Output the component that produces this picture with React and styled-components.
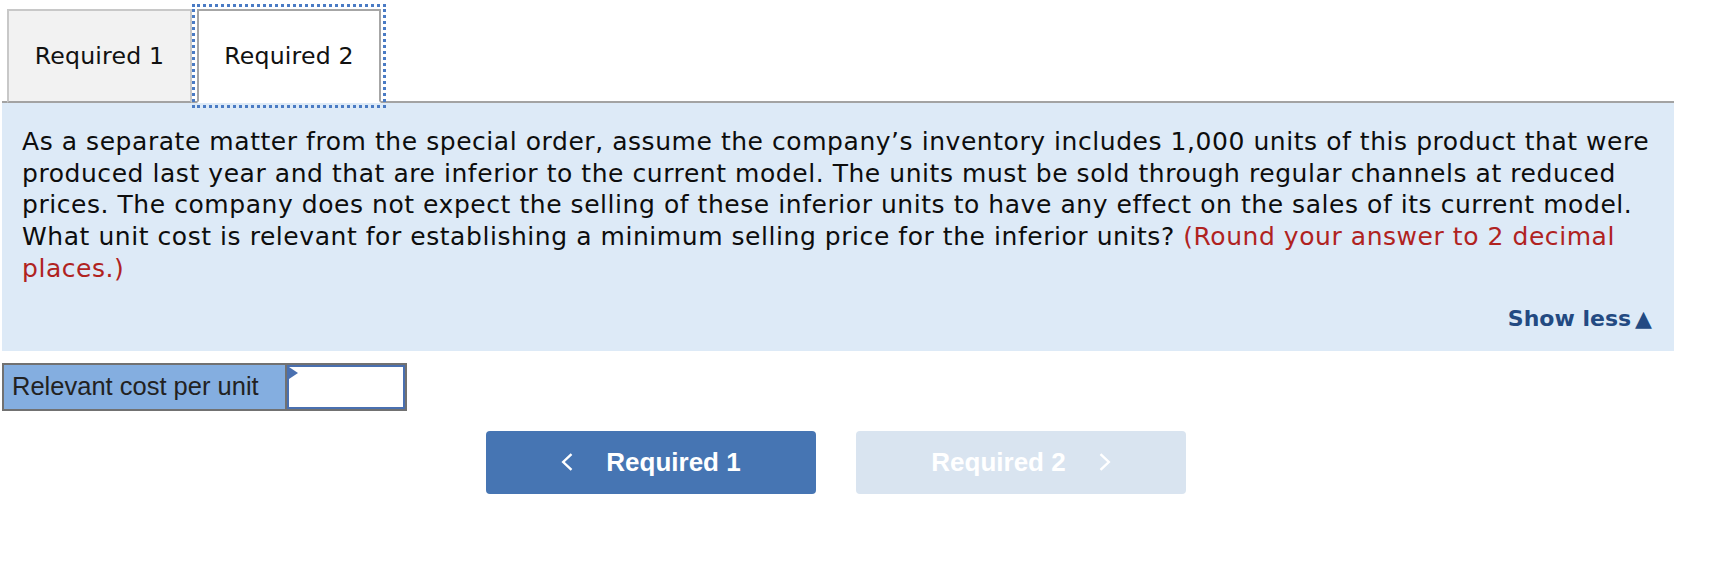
import React from "react";
import styled, { createGlobalStyle } from "styled-components";

const Global = createGlobalStyle`
  html, body { margin: 0; padding: 0; background: #fff; }
  body { font-family: "DejaVu Sans", Verdana, sans-serif; color: #111; }
`;

const Page = styled.div`
  width: 1716px;
  padding: 4px 42px 0 2px;
  box-sizing: border-box;
`;

const TabBar = styled.div`
  display: flex;
  align-items: flex-end;
  gap: 5px;
  padding-left: 5px;
  padding-top: 5px;
  border-bottom: 2px solid #a3a3a3;
`;

const Tab = styled.button`
  box-sizing: border-box;
  width: ${(p) => (p.active ? "184px" : "185px")};
  height: 94px;
  margin-bottom: -2px;
  display: flex;
  align-items: center;
  justify-content: center;
  font-family: "DejaVu Sans", Verdana, sans-serif;
  font-size: 23.6px;
  letter-spacing: 0.2px;
  color: #111;
  background: ${(p) => (p.active ? "#fff" : "#f2f2f2")};
  border: 2px solid ${(p) => (p.active ? "#a6a6a6" : "#c8c8c8")};
  border-bottom: ${(p) => (p.active ? "2px solid #fff" : "2px solid #a3a3a3")};
  outline: ${(p) => (p.active ? "3px dotted #4a7bc4" : "none")};
  outline-offset: 2px;
  padding: 0;
  cursor: pointer;
`;

const Panel = styled.div`
  background: #ddeaf7;
  padding: 23px 14px 19px 20px;
`;

const Question = styled.p`
  margin: 0;
  font-size: 25px;
  letter-spacing: 0.55px;
  line-height: 31.7px;
  color: #0d0d0d;
`;

const Hint = styled.span`
  color: #b0231f;
`;

const ShowLess = styled.div`
  display: flex;
  justify-content: flex-end;
  align-items: baseline;
  gap: 4px;
  margin-top: 21px;
  padding-right: 8px;
  font-size: 22px;
  line-height: 26px;
  font-weight: bold;
  color: #234a82;
  cursor: pointer;
`;

const AnswerRow = styled.div`
  display: inline-flex;
  margin-top: 12px;
  border: 2px solid #717171;
`;

const Label = styled.div`
  box-sizing: border-box;
  width: 283px;
  height: 44px;
  display: flex;
  align-items: center;
  padding-left: 8px;
  background: #84aee0;
  border-right: 2px solid #717171;
  font-family: "Liberation Sans", Arial, sans-serif;
  font-size: 25.5px;
  color: #222;
`;

const InputWrap = styled.div`
  position: relative;
  display: flex;
`;

const Input = styled.input`
  box-sizing: border-box;
  width: 118px;
  height: 44px;
  border: 2px solid #4a70b0;
  background: #fff;
  outline: none;
`;

const Flag = styled.span`
  position: absolute;
  left: 2px;
  top: 2px;
  width: 0;
  height: 0;
  border-top: 6px solid transparent;
  border-bottom: 6px solid transparent;
  border-left: 9px solid #4a70b0;
`;

const NavRow = styled.div`
  display: flex;
  justify-content: center;
  gap: 40px;
  margin-top: 20px;
  padding-right: 4px;
`;

const NavButton = styled.button`
  width: 330px;
  height: 63px;
  display: flex;
  align-items: center;
  justify-content: center;
  gap: 33px;
  border: none;
  border-radius: 4px;
  background: ${(p) => (p.disabled ? "#d9e4f0" : "#4675b3")};
  color: #fff;
  font-family: "Liberation Sans", Arial, sans-serif;
  font-weight: bold;
  font-size: 26px;
  padding: 0;
  cursor: ${(p) => (p.disabled ? "default" : "pointer")};
`;

const Chevron = ({ dir }) => (
  <svg width="12" height="18" viewBox="0 0 12 18" fill="none">
    <path
      d={dir === "left" ? "M10.5 1.2 L2.2 9 L10.5 16.8" : "M1.5 1.2 L9.8 9 L1.5 16.8"}
      stroke="#fff"
      strokeWidth="2.4"
    />
  </svg>
);

export default function App() {
  return (
    <>
      <Global />
      <Page>
        <TabBar>
          <Tab>Required 1</Tab>
          <Tab active>Required 2</Tab>
        </TabBar>
        <Panel>
          <Question>
            As a separate matter from the special order, assume the company’s inventory includes 1,000 units of
            this product that were produced last year and that are inferior to the current model. The units must
            be sold through regular channels at reduced prices. The company does not expect the selling of these
            inferior units to have any effect on the sales of its current model. What unit cost is relevant for
            establishing a minimum selling price for the inferior units?{" "}
            <Hint>(Round your answer to 2 decimal places.)</Hint>
          </Question>
          <ShowLess>
            Show less<span>▲</span>
          </ShowLess>
        </Panel>
        <AnswerRow>
          <Label>Relevant cost per unit</Label>
          <InputWrap>
            <Input type="text" />
            <Flag />
          </InputWrap>
        </AnswerRow>
        <NavRow>
          <NavButton>
            <Chevron dir="left" />
            Required 1
          </NavButton>
          <NavButton disabled>
            Required 2
            <Chevron dir="right" />
          </NavButton>
        </NavRow>
      </Page>
    </>
  );
}
